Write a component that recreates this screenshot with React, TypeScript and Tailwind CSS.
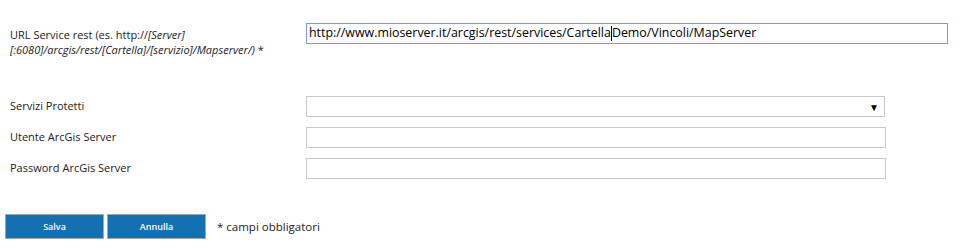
export default function App() {
  return (
    <div className="h-[249px] w-[966px] bg-white font-['Open_Sans',sans-serif] text-[11px] text-[#222]">
      <div className="flex pt-[23px]">
        <div className="w-[306px] shrink-0 pl-[10px] pt-[4px] leading-[15px]">
          URL Service rest (es. http://<i>[Server]</i>
          <br />
          <i>[:6080]/arcgis/rest/[Cartella]/[servizio]/Mapserver/)</i> *
        </div>
        <div className="flex h-[21px] w-[642px] items-center border border-[#7a9ae0] pl-[2px] text-[12.4px] text-black">
          <span>http://www.mioserver.it/arcgis/rest/services/Cartella</span>
          <span className="h-[15px] w-px bg-black" />
          <span>Demo/Vincoli/MapServer</span>
        </div>
      </div>

      <div className="mt-[39px] flex items-center">
        <div className="w-[306px] shrink-0 pl-[10px]">Servizi Protetti</div>
        <div className="flex h-[21px] w-[579px] items-center justify-end border border-[#c8c8c8] pr-[5px]">
          <span className="text-[10px] leading-none text-black">▼</span>
        </div>
      </div>

      <div className="mt-[10px] flex items-center">
        <div className="w-[306px] shrink-0 pl-[10px]">Utente ArcGis Server</div>
        <div className="h-[21px] w-[580px] border border-[#c8c8c8]" />
      </div>

      <div className="mt-[10px] flex items-center">
        <div className="w-[306px] shrink-0 pl-[10px]">Password ArcGis Server</div>
        <div className="h-[21px] w-[580px] border border-[#c8c8c8]" />
      </div>

      <div className="mt-[35px] flex items-center pl-[5px]">
        <button className="h-[25px] w-[99px] border border-[#a0a8b0] bg-[#1570b0] text-[9px] font-semibold text-white">
          Salva
        </button>
        <button className="ml-[3px] h-[25px] w-[99px] border border-[#a0a8b0] bg-[#1570b0] text-[9px] font-semibold text-white">
          Annulla
        </button>
        <span className="ml-[11px] text-[11.5px]">* campi obbligatori</span>
      </div>
    </div>
  );
}
